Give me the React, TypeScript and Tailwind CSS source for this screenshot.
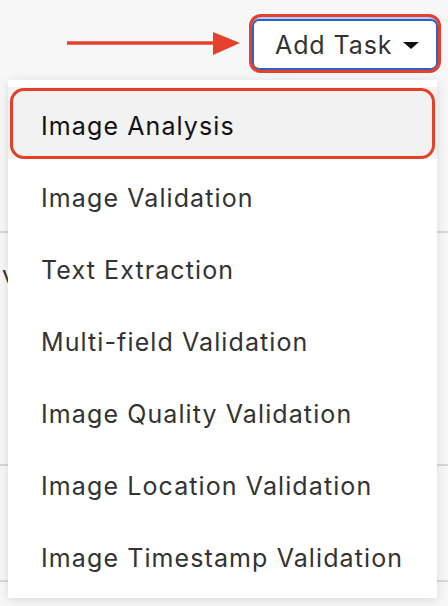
const items = [
  "Image Analysis",
  "Image Validation",
  "Text Extraction",
  "Multi-field Validation",
  "Image Quality Validation",
  "Image Location Validation",
  "Image Timestamp Validation",
];

export default function App() {
  return (
    <div className="relative w-[448px] h-[606px] overflow-hidden bg-[#f7f7f7] font-['Inter',sans-serif] text-[#212529]">
      {/* top bar */}
      <div className="flex justify-end pt-[19px] pr-[10px]">
        <button className="flex h-[51px] w-[186px] items-center gap-[11px] rounded-[7px] border-2 border-[#2f5fc8] bg-white pl-[21px] pt-[2px] text-[25px] tracking-[0.9px] text-[#333] ring-[3px] ring-[#b3cbf5]">
          Add Task
          <span className="h-0 w-0 border-x-[8px] border-t-[7px] border-x-transparent border-t-[#111]" />
        </button>
      </div>

      {/* page content behind the menu */}
      <div className="mt-[10px]">
        <div className="h-[153px] border-b-2 border-[#d3d8de]" />
        <div className="h-[233px] border-b-2 border-[#d3d8de] pt-[24px] pl-[2px] text-[24px] text-[#333]">
          v
        </div>
        <div className="h-[116px] border-b-2 border-[#d3d8de]" />
      </div>

      {/* dropdown menu */}
      <div className="absolute left-[8px] top-[80px] w-[429px] bg-white py-[7px] shadow-[0_2px_10px_rgba(0,0,0,0.12)]">
        {items.map((item, i) => (
          <div
            key={item}
            className={`flex h-[72px] items-center pl-[33px] pt-[7px] text-[25px] tracking-[1.1px] ${i === 0 ? "bg-[#f2f2f2] text-[#111]" : "text-[#333]"}`}
          >
            {item}
          </div>
        ))}
      </div>

      {/* annotations */}
      <div className="absolute left-[249px] top-[14px] h-[59px] w-[192px] rounded-[12px] border-[3px] border-[#e4402a]" />
      <div className="absolute left-[10px] top-[88px] h-[71px] w-[425px] rounded-[14px] border-[3px] border-[#e4402a]" />
      <svg className="absolute left-[64px] top-[30px]" width="180" height="28" viewBox="0 0 180 28">
        <line x1="3" y1="13" x2="152" y2="13" stroke="#e4402a" strokeWidth="3.5" />
        <polygon points="149,2 176,13 149,25" fill="#e4402a" />
      </svg>
    </div>
  );
}
